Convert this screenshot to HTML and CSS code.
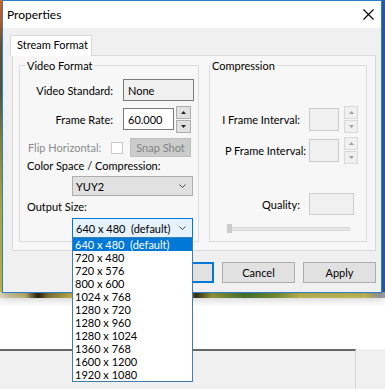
FILE: index.html
```html
<!DOCTYPE html>
<html lang="en">
<head>
  <meta charset="UTF-8">
  <meta name="viewport" content="width=device-width, initial-scale=1.0">
  <title>Properties</title>
  <link rel="stylesheet" href="styles.css">
</head>
<body>
  <div class="desktop">
    <div class="video"></div>
    <div class="host-top"></div>
    <div class="host-bottom">
      <div class="host-pane"></div>
      <div class="host-side"></div>
    </div>
  </div>

  <div class="dialog">
    <div class="titlebar">
      <span class="title">Properties</span>
      <span class="close">
        <svg width="11" height="11" viewBox="0 0 11 11"><path d="M0.5 0.5 L10.5 10.5 M10.5 0.5 L0.5 10.5" stroke="#000" stroke-width="1.1" fill="none"/></svg>
      </span>
    </div>

    <div class="dlg-body">
      <div class="tabs"><div class="tab">Stream Format</div></div>

      <div class="page">
        <div class="group vf">
          <div class="group-title">Video Format</div>

          <div class="row r-std">
            <span class="lbl w-std">Video Standard:</span>
            <div class="edit ro w-none">None</div>
          </div>

          <div class="row r-rate">
            <span class="lbl w-std">Frame Rate:</span>
            <div class="edit w-rate">60.000</div>
            <div class="spin">
              <span><svg width="5" height="3" viewBox="0 0 5 3"><path d="M0 3 L2.5 0 L5 3Z" fill="#222"/></svg></span>
              <span><svg width="5" height="3" viewBox="0 0 5 3"><path d="M0 0 L2.5 3 L5 0Z" fill="#222"/></svg></span>
            </div>
          </div>

          <div class="row r-flip">
            <span class="lbl off w-flip">Flip Horizontal:</span>
            <span class="check"></span>
            <div class="btn-off">Snap Shot</div>
          </div>

          <div class="caption c-color">Color Space / Compression:</div>
          <div class="combo">
            <span>YUY2</span>
            <svg class="chev" width="7" height="4" viewBox="0 0 7 4"><path d="M0.5 0.5 L3.5 3.5 L6.5 0.5" stroke="#444" fill="none"/></svg>
          </div>

          <div class="caption c-out">Output Size:</div>
          <div class="combo open">
            <span class="pre">640 x 480  (default)</span>
            <svg class="chev" width="7" height="4" viewBox="0 0 7 4"><path d="M0.5 0.5 L3.5 3.5 L6.5 0.5" stroke="#444" fill="none"/></svg>
            <ul class="drop">
              <li class="sel">640 x 480  (default)</li>
              <li>720 x 480</li>
              <li>720 x 576</li>
              <li>800 x 600</li>
              <li>1024 x 768</li>
              <li>1280 x 720</li>
              <li>1280 x 960</li>
              <li>1280 x 1024</li>
              <li>1360 x 768</li>
              <li>1600 x 1200</li>
              <li>1920 x 1080</li>
            </ul>
          </div>
        </div>

        <div class="group comp">
          <div class="group-title">Compression</div>

          <div class="row r-iframe">
            <span class="lbl w-int">I Frame Interval:</span>
            <div class="edit dis w-int-box"></div>
            <div class="spin dis">
              <span><svg width="5" height="3" viewBox="0 0 5 3"><path d="M0 3 L2.5 0 L5 3Z" fill="#a0a0a0"/></svg></span>
              <span><svg width="5" height="3" viewBox="0 0 5 3"><path d="M0 0 L2.5 3 L5 0Z" fill="#a0a0a0"/></svg></span>
            </div>
          </div>

          <div class="row r-pframe">
            <span class="lbl w-pint">P Frame Interval:</span>
            <div class="edit dis w-int-box"></div>
            <div class="spin dis">
              <span><svg width="5" height="3" viewBox="0 0 5 3"><path d="M0 3 L2.5 0 L5 3Z" fill="#a0a0a0"/></svg></span>
              <span><svg width="5" height="3" viewBox="0 0 5 3"><path d="M0 0 L2.5 3 L5 0Z" fill="#a0a0a0"/></svg></span>
            </div>
          </div>

          <div class="row r-quality">
            <span class="lbl w-int">Quality:</span>
            <div class="edit dis w-q"></div>
          </div>

          <div class="slider">
            <span class="thumb"></span>
            <span class="track"></span>
          </div>
        </div>
      </div>

      <div class="buttons">
        <div class="btn default">OK</div>
        <div class="btn">Cancel</div>
        <div class="btn">Apply</div>
      </div>
    </div>
  </div>
</body>
</html>
```

FILE: styles.css
```css
body {
  margin: 0;
  width: 385px;
  height: 389px;
  overflow: hidden;
  position: relative;
  background: #f0f0f0;
  font-family: Lato, "Noto Sans", sans-serif;
  font-size: 11px;
  color: #000;
}

/* what sits behind the dialog */
.video {
  height: 298px;
  background:
    linear-gradient(to right, #e4ddc7 0, #cfc27a 25px, #2b2412 38px, #8a7a3a 48px, #cbbd52 70px, #c9c150 185px, #3a3418 196px, #a1a443 212px, #4d7d35 245px, #7d9a3a 275px, #cfc55a 300px, #d2c95e 365px, #9e9ea6 380px) bottom / 100% 6px no-repeat,
    linear-gradient(to right, transparent 381px, #2a63a8 381px),
    linear-gradient(to bottom, #e1671f 0, #c8652a 22px, #6a5a3c 45px, #55604a 90px, #8c8f45 140px, #b9b44a 200px, #cfc24c 280px);
}
.host-top {
  height: 51px;
  background: linear-gradient(#f3f3f3, #fff 10px);
}
.host-bottom {
  display: flex;
  height: 40px;
}
.host-pane {
  width: 356px;
  box-sizing: border-box;
  border-top: 2px solid #666;
  border-right: 1px solid #d6d6d6;
}
.host-side {
  flex: 1;
  background: #f0f0f0;
}

/* dialog window */
.dialog {
  position: absolute;
  left: 2px;
  top: 0;
  width: 380px;
  height: 293px;
  box-sizing: border-box;
  border: 1px solid #2f7fc8;
  background: #f0f0f0;
  box-shadow: 0 3px 10px rgba(0, 0, 0, 0.25);
}
.titlebar {
  height: 27px;
  background: #fff;
  display: flex;
  align-items: center;
  padding-left: 4px;
}
.title {
  font-size: 12px;
}
.close {
  margin-left: auto;
  margin-right: 7px;
  display: flex;
}
.dlg-body {
  padding: 7px 5px 9px 9px;
}

.tabs {
  display: flex;
  height: 20px;
  margin-left: -2px;
}
.tab {
  box-sizing: border-box;
  width: 82px;
  height: 21px;
  background: #fff;
  border: 1px solid #d9d9d9;
  border-bottom: none;
  padding-left: 6px;
  line-height: 17px;
  position: relative;
  z-index: 1;
}
.page {
  box-sizing: border-box;
  height: 196px;
  border: 1px solid #d9d9d9;
  background: #f7f7f7;
  display: flex;
  gap: 10px;
  padding: 9px 8px 8px 6px;
}

.group {
  box-sizing: border-box;
  border: 1px solid #dcdcdc;
}
.vf {
  width: 180px;
}
.comp {
  width: 158px;
}
.group-title {
  display: block;
  width: fit-content;
  margin-top: -7px;
  padding: 0 2px;
  height: 13px;
  line-height: 13px;
  background: #f7f7f7;
}
.vf .group-title {
  margin-left: 5px;
}
.comp .group-title {
  margin-left: 0;
}

.row {
  display: flex;
  align-items: center;
}
.lbl {
  text-align: right;
  white-space: nowrap;
}
.lbl.off {
  text-align: left;
  color: #8c8c8c;
}
.w-std {
  width: 93px;
  margin-right: 10px;
}
.w-flip {
  width: 83px;
  margin-left: 8px;
}
.w-int {
  width: 90px;
  margin-right: 9px;
}
.w-pint {
  width: 96px;
  margin-right: 3px;
}

.r-std {
  height: 22px;
  margin-top: 7px;
}
.r-rate {
  height: 22px;
  margin-top: 7px;
}
.r-flip {
  height: 19px;
  margin-top: 8px;
}

.edit {
  box-sizing: border-box;
  height: 100%;
  border: 1px solid #7a7a7a;
  background: #fff;
  padding-left: 4px;
  display: flex;
  align-items: center;
}
.edit.ro {
  background: #f0f0f0;
}
.edit.dis {
  border-color: #cccccc;
  background: #f0f0f0;
}
.w-none {
  width: 71px;
}
.w-rate {
  width: 51px;
}
.w-int-box {
  width: 30px;
}
.w-q {
  width: 45px;
}

.spin {
  display: flex;
  flex-direction: column;
  gap: 1px;
  margin-left: 2px;
}
.spin span {
  box-sizing: border-box;
  width: 15px;
  height: 13px;
  border: 1px solid #adadad;
  background: #e1e1e1;
  display: flex;
  align-items: center;
  justify-content: center;
}
.spin.dis {
  margin-left: 5px;
}
.spin.dis span {
  width: 14px;
  border-color: #d9d9d9;
  background: #f0f0f0;
}

.check {
  box-sizing: border-box;
  width: 12px;
  height: 12px;
  border: 1px solid #cccccc;
  background: #fff;
}
.btn-off {
  box-sizing: border-box;
  width: 61px;
  height: 19px;
  margin-left: 7px;
  background: #cccccc;
  border: 1px solid #bfbfbf;
  color: #838383;
  text-align: center;
  line-height: 17px;
}

.caption {
  line-height: 13px;
  padding-left: 7px;
}
.c-color {
  margin-top: 2px;
}
.c-out {
  margin-top: 4px;
}

.combo {
  box-sizing: border-box;
  width: 121px;
  height: 20px;
  margin: 4px 0 0 52px;
  border: 1px solid #adadad;
  background: #e1e1e1;
  padding-left: 3px;
  display: flex;
  align-items: center;
  position: relative;
}
.combo.open {
  margin-top: 5px;
  border-color: #0078d7;
  background: #e5f1fb;
}
.chev {
  margin-left: auto;
  margin-right: 6px;
}
.pre {
  white-space: pre;
}

.drop {
  position: absolute;
  left: -1px;
  top: 18px;
  z-index: 5;
  box-sizing: border-box;
  width: 121px;
  margin: 0;
  padding: 0;
  list-style: none;
  background: #fff;
  border: 1px solid #3c7fb1;
}
.drop li {
  height: 13px;
  line-height: 13px;
  padding-left: 2px;
  white-space: pre;
}
.drop li.sel {
  background: #0078d7;
  color: #fff;
}

.r-iframe {
  height: 23px;
  margin-top: 36px;
}
.r-pframe {
  height: 23px;
  margin-top: 8px;
}
.r-quality {
  height: 22px;
  margin-top: 31px;
}

.slider {
  display: flex;
  align-items: center;
  width: 123px;
  height: 9px;
  margin: 9px 0 0 17px;
}
.thumb {
  width: 5px;
  height: 9px;
  background: #cccccc;
  margin-right: -5px;
  position: relative;
  z-index: 1;
}
.track {
  flex: 1;
  box-sizing: border-box;
  height: 4px;
  border: 1px solid #d6d6d6;
  background: #e7e7e7;
}

.buttons {
  display: flex;
  justify-content: flex-end;
  gap: 8px;
  margin-top: 11px;
}
.btn {
  box-sizing: border-box;
  width: 73px;
  height: 21px;
  background: #e1e1e1;
  border: 1px solid #adadad;
  text-align: center;
  line-height: 19px;
}
.btn.default {
  border: 2px solid #0078d7;
  line-height: 17px;
}
```
